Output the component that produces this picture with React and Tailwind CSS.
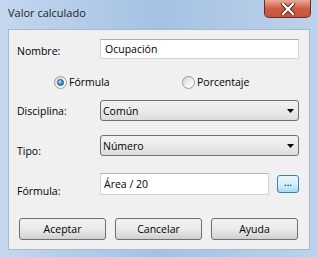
import React from "react";

function Radio({ checked, label }) {
  return (
    <div className="flex items-center">
      <span className="relative flex items-center justify-center w-[13px] h-[13px] rounded-full border border-[#9a9b9c] bg-gradient-to-br from-[#cfd0d1] via-[#f1f1f1] to-[#fdfdfd]">
        {checked && (
          <span className="w-[7px] h-[7px] rounded-full bg-[radial-gradient(circle_at_35%_35%,#bfe6fb,#2b8fd0_55%,#1c5f96)] border border-[#1b4f7e]" />
        )}
      </span>
      <span className="ml-[2px]">{label}</span>
    </div>
  );
}

function Select({ value }) {
  return (
    <div className="flex items-center justify-between w-[199px] h-[21px] rounded-[3px] border border-[#707070] bg-gradient-to-b from-[#f2f2f2] via-[#ebebeb] to-[#dcdcdc] pl-[2px] pr-[4px]">
      <span>{value}</span>
      <svg width="7" height="4" viewBox="0 0 7 4">
        <path d="M0 0 H7 L3.5 4 Z" fill="#000" />
      </svg>
    </div>
  );
}

function Btn({ children }) {
  return (
    <div className="flex items-center justify-center w-[87px] h-[22px] rounded-[3px] border border-[#707070] bg-gradient-to-b from-[#f2f2f2] via-[#ebebeb] to-[#cfcfcf]">
      {children}
    </div>
  );
}

export default function App() {
  return (
    <div className="w-[317px] h-[257px] flex flex-col bg-gradient-to-r from-[#c3d7ee] via-[#a5c1e3] to-[#bcd2ea] font-['Open_Sans',sans-serif] text-[10.5px] text-black leading-[16px]">
      <div className="h-[29px] flex items-start justify-between pl-[8px] pr-[6px]">
        <span className="pt-[5px] text-[11px] text-[#1e1e1e]">Valor calculado</span>
        <div className="w-[47px] h-[18px] flex items-center justify-center rounded-b-[5px] border border-t-0 border-[#6b2a22] bg-gradient-to-b from-[#e9a996] via-[#cf5b45] to-[#c9523c]">
          <svg width="14" height="12" viewBox="0 0 14 12">
            <path d="M2 1 L12 11 M12 1 L2 11" stroke="#5a1a12" strokeWidth="4" strokeLinecap="round" />
            <path d="M2 1 L12 11 M12 1 L2 11" stroke="#ffffff" strokeWidth="2.4" strokeLinecap="round" />
          </svg>
        </div>
      </div>
      <div className="ml-[8px] mr-[7px] h-[221px] bg-[#f0f0f0] border border-[#a7b8cf] flex flex-col pl-[8px]">
        <div className="flex items-start mt-[9px] h-[20px]">
          <span className="w-[83px] pt-[4px]">Nombre:</span>
          <div className="w-[199px] h-[20px] border border-[#d3d5da] border-t-[#abadb3] bg-white flex items-center pl-[4px]">
            Ocupación
          </div>
        </div>
        <div className="flex items-center mt-[16px] h-[14px]">
          <div className="ml-[37px] w-[128px]">
            <Radio checked label="Fórmula" />
          </div>
          <Radio label="Porcentaje" />
        </div>
        <div className="flex items-start mt-[11px] h-[21px]">
          <span className="w-[83px] pt-[3px]">Disciplina:</span>
          <Select value="Común" />
        </div>
        <div className="flex items-start mt-[14px] h-[21px]">
          <span className="w-[83px] pt-[8px]">Tipo:</span>
          <Select value="Número" />
        </div>
        <div className="flex items-start mt-[17px] h-[22px]">
          <span className="w-[83px] pt-[10px]">Fórmula:</span>
          <div className="w-[169px] h-[22px] border border-[#c5d5e8] border-t-[#a9b8cb] bg-white flex items-center pl-[3px]">
            Área / 20
          </div>
          <div className="ml-[8px] mt-[2px] w-[22px] h-[18px] rounded-[3px] border border-[#3c7fb1] bg-gradient-to-b from-[#eaf6fd] via-[#d9f0fc] to-[#a7d9f5] flex items-center justify-center text-[10px] leading-none pb-[4px]">
            ...
          </div>
        </div>
        <div className="flex items-start mt-[23px] pl-[2px] gap-[9px]">
          <Btn>Aceptar</Btn>
          <Btn>Cancelar</Btn>
          <Btn>Ayuda</Btn>
        </div>
      </div>
    </div>
  );
}
